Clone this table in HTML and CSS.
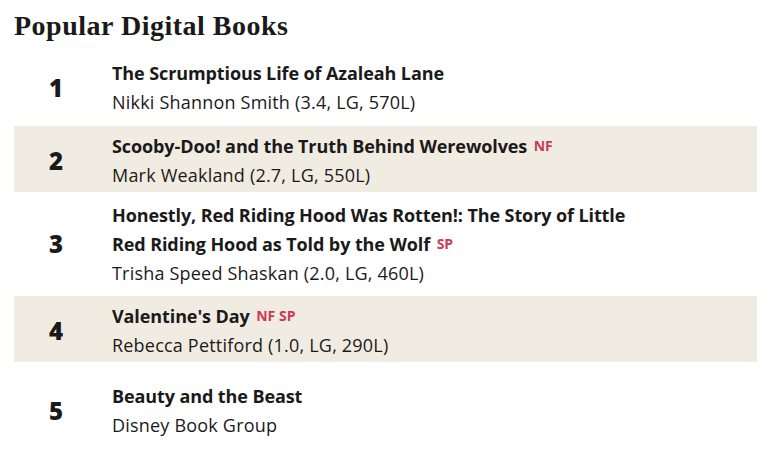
FILE: index.html
```html
<!DOCTYPE html>
<html lang="en">
<head>
<meta charset="utf-8">
<title>Popular Digital Books</title>
<link rel="stylesheet" href="styles.css">
</head>
<body>
<section class="panel">
  <h2 class="heading">Popular Digital Books</h2>
  <ol class="list">
    <li class="row row--first">
      <span class="rank">1</span>
      <div class="info">
        <div class="title">The Scrumptious Life of Azaleah Lane</div>
        <div class="author">Nikki Shannon Smith (3.4, LG, 570L)</div>
      </div>
    </li>
    <li class="row row--shade">
      <span class="rank">2</span>
      <div class="info">
        <div class="title">Scooby-Doo! and the Truth Behind Werewolves <span class="tag">NF</span></div>
        <div class="author">Mark Weakland (2.7, LG, 550L)</div>
      </div>
    </li>
    <li class="row row--mid">
      <span class="rank">3</span>
      <div class="info">
        <div class="title">Honestly, Red Riding Hood Was Rotten!: The Story of Little Red Riding Hood as Told by the Wolf <span class="tag">SP</span></div>
        <div class="author">Trisha Speed Shaskan (2.0, LG, 460L)</div>
      </div>
    </li>
    <li class="row row--shade">
      <span class="rank">4</span>
      <div class="info">
        <div class="title">Valentine's Day <span class="tag">NF SP</span></div>
        <div class="author">Rebecca Pettiford (1.0, LG, 290L)</div>
      </div>
    </li>
    <li class="row row--last">
      <span class="rank">5</span>
      <div class="info">
        <div class="title">Beauty and the Beast</div>
        <div class="author">Disney Book Group</div>
      </div>
    </li>
  </ol>
</section>
</body>
</html>
```

FILE: styles.css
```css
html, body {
  margin: 0;
  padding: 0;
  background: #ffffff;
}

body {
  color: #1a1a1a;
  font-family: "Open Sans", "Noto Sans", sans-serif;
}

.panel {
  width: 743px;
  padding: 0 0 0 14px;
}

.heading {
  margin: 10px 0 0;
  font-family: "Liberation Serif", "DejaVu Serif", serif;
  font-size: 28px;
  line-height: 32px;
  font-weight: 700;
  letter-spacing: 0.5px;
  color: #1a1a1a;
}

.list {
  list-style: none;
  margin: 0;
  padding: 0;
}

.row {
  display: flex;
  align-items: center;
  padding: 6px 0 3px;
}

.row--shade {
  background: #f1ece2;
}

.row--first {
  padding: 17px 0 10px;
}

.row--mid {
  padding: 9px 0 9px;
}

.row--last {
  padding: 20px 0 9px;
}

.rank {
  flex: 0 0 84px;
  text-align: center;
  font-size: 24px;
  font-weight: 800;
  line-height: 30px;
}

.info {
  margin-left: 14px;
  flex: 0 1 530px;
  min-width: 0;
}

.title {
  font-size: 18px;
  font-weight: 700;
  line-height: 29px;
  letter-spacing: -0.1px;
}

.author {
  font-size: 18px;
  font-weight: 400;
  line-height: 28px;
  letter-spacing: 0.2px;
}

.tag {
  display: inline-block;
  vertical-align: 2px;
  line-height: 16px;
  margin-left: 2px;
  font-size: 14px;
  font-weight: 700;
  letter-spacing: 0;
  color: #cc3a55;
}
```
